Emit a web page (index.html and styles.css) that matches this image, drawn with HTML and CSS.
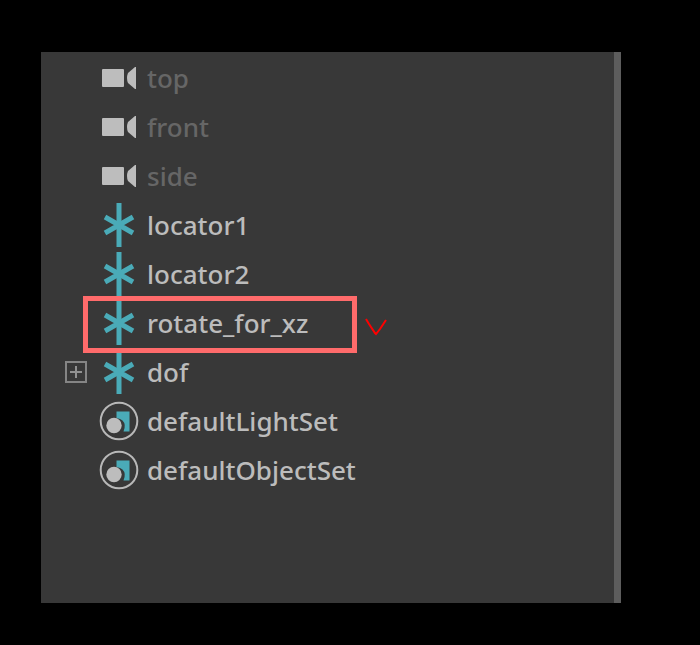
FILE: index.html
```html
<!DOCTYPE html>
<html lang="en">
<head>
<meta charset="utf-8">
<title>Outliner</title>
<link rel="stylesheet" href="styles.css">
</head>
<body>
<svg class="symbols" aria-hidden="true">
  <symbol id="camera" viewBox="0 0 40 48">
    <rect x="3" y="15" width="22" height="18" rx="1" fill="#bdbdbd"/>
    <path d="M37 13v22h-1l-7-6q-2-5 0-10l7-6z" fill="#bdbdbd"/>
  </symbol>
  <symbol id="locator" viewBox="0 0 40 48">
    <path d="M20 2v44" fill="none" stroke="#4aabb8" stroke-width="5"/>
    <path d="M6 16l28 16M34 16l-28 16" fill="none" stroke="#4aabb8" stroke-width="5"/>
  </symbol>
  <symbol id="set" viewBox="0 0 40 48">
    <circle cx="20" cy="24" r="18.300" fill="none" stroke="#b8b8b8" stroke-width="2"/>
    <path d="M17.500 14.500h13v20h-6q3-7-1-11-2-2-6-2.500z" fill="#4aabb8"/>
    <circle cx="15" cy="28.500" r="7.700" fill="#bdbdbd"/>
  </symbol>
</svg>
<main class="outliner">
  <ul class="tree">
    <li class="row hidden-node"><svg class="icon" aria-hidden="true"><use href="#camera"/></svg><span class="name">top</span></li>
    <li class="row hidden-node"><svg class="icon" aria-hidden="true"><use href="#camera"/></svg><span class="name">front</span></li>
    <li class="row hidden-node"><svg class="icon" aria-hidden="true"><use href="#camera"/></svg><span class="name">side</span></li>
    <li class="row"><svg class="icon" aria-hidden="true"><use href="#locator"/></svg><span class="name">locator1</span></li>
    <li class="row"><svg class="icon" aria-hidden="true"><use href="#locator"/></svg><span class="name">locator2</span></li>
    <li class="row marked"><svg class="icon" aria-hidden="true"><use href="#locator"/></svg><span class="name">rotate_for_xz</span>
      <svg class="check" viewBox="0 0 22 18" aria-hidden="true"><path d="M1 1l3 5 6 9 1 1 4-5 6-9" fill="none" stroke="#f00" stroke-width="2"/></svg></li>
    <li class="row"><button class="toggle" type="button" aria-label="Expand dof"><svg viewBox="0 0 22 22" aria-hidden="true"><path d="M5 11h12M11 5v12" stroke="#919191" stroke-width="2"/><rect x="1" y="1" width="20" height="20" fill="none" stroke="#858585" stroke-width="2"/></svg></button><svg class="icon" aria-hidden="true"><use href="#locator"/></svg><span class="name">dof</span></li>
    <li class="row"><svg class="icon" aria-hidden="true"><use href="#set"/></svg><span class="name">defaultLightSet</span></li>
    <li class="row"><svg class="icon" aria-hidden="true"><use href="#set"/></svg><span class="name">defaultObjectSet</span></li>
  </ul>
</main>
</body>
</html>
```
FILE: styles.css
```css
*,
*::after {
  box-sizing: border-box;
}

body {
  display: flex;
  min-height: 100vh;
  margin: 0;
  padding: 52px 79px 42px 41px;
  background: #000;
  color: #bcbcbc;
  font: 500 26px/32px "Noto Sans", sans-serif;
}

.symbols {
  position: absolute;
  width: 0;
  height: 0;
}

.outliner {
  flex: 1;
  border-right: 7px solid #5d5d5d;
  background: #383838;
}

.tree {
  margin: 0;
  padding: 1px 0 0 24px;
  list-style: none;
}

.row {
  position: relative;
  display: grid;
  grid-template-columns: 22px 40px 1fr;
  column-gap: 12px;
  align-items: center;
  height: 49px;
}

.icon {
  grid-column: 2;
  width: 40px;
  height: 48px;
}

.name {
  grid-column: 3;
  margin-left: -4px;
  white-space: nowrap;
}

.hidden-node .name {
  color: #666;
}

.toggle {
  display: block;
  width: 22px;
  height: 22px;
  padding: 0;
  border: 0;
  background: none;
}

.toggle svg {
  display: block;
}

.marked {
  z-index: 1;
}

.marked::after {
  content: "";
  position: absolute;
  top: -2px;
  left: 18px;
  width: 274px;
  height: 57px;
  border: 5px solid #ff6b6b;
}

.check {
  position: absolute;
  top: 20px;
  left: 300px;
  width: 22px;
  height: 18px;
}
```
